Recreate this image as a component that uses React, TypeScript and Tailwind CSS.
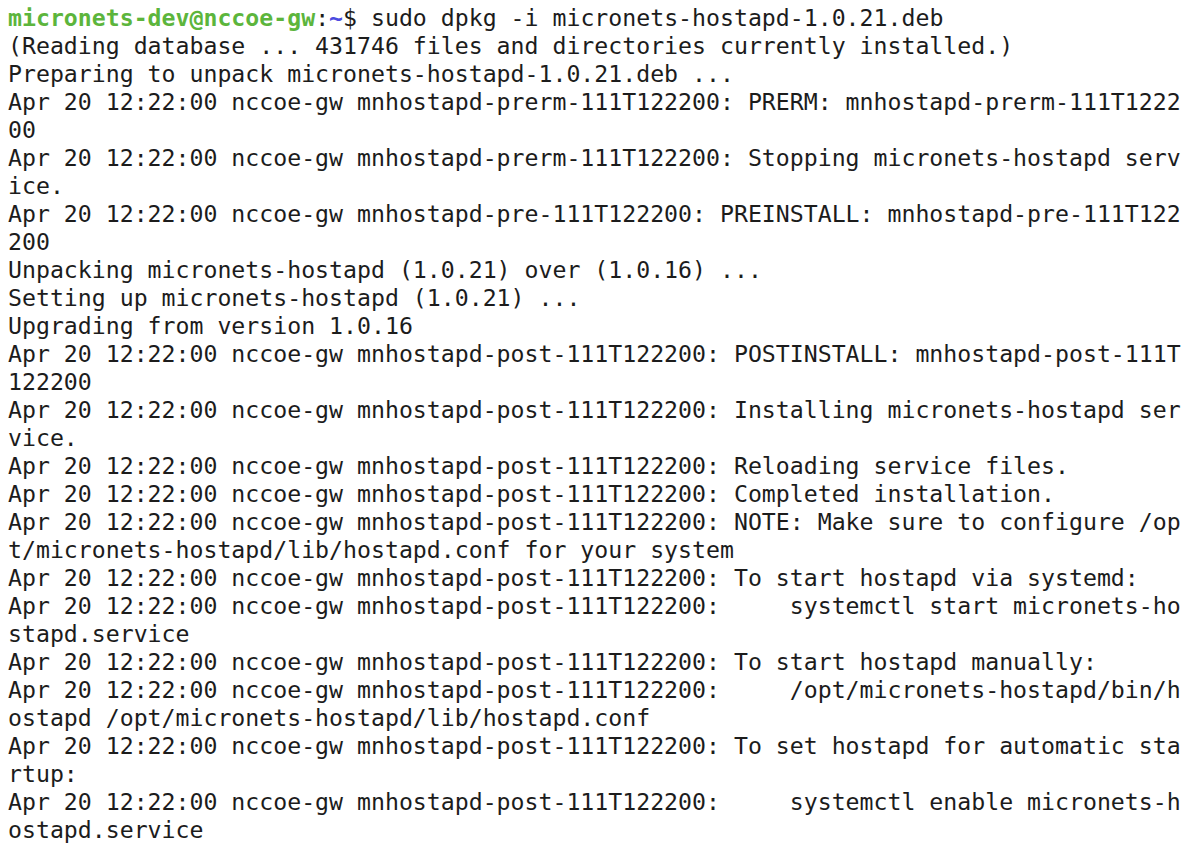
const lines: string[] = [
  "(Reading database ... 431746 files and directories currently installed.)",
  "Preparing to unpack micronets-hostapd-1.0.21.deb ...",
  "Apr 20 12:22:00 nccoe-gw mnhostapd-prerm-111T122200: PRERM: mnhostapd-prerm-111T1222",
  "00",
  "Apr 20 12:22:00 nccoe-gw mnhostapd-prerm-111T122200: Stopping micronets-hostapd serv",
  "ice.",
  "Apr 20 12:22:00 nccoe-gw mnhostapd-pre-111T122200: PREINSTALL: mnhostapd-pre-111T122",
  "200",
  "Unpacking micronets-hostapd (1.0.21) over (1.0.16) ...",
  "Setting up micronets-hostapd (1.0.21) ...",
  "Upgrading from version 1.0.16",
  "Apr 20 12:22:00 nccoe-gw mnhostapd-post-111T122200: POSTINSTALL: mnhostapd-post-111T",
  "122200",
  "Apr 20 12:22:00 nccoe-gw mnhostapd-post-111T122200: Installing micronets-hostapd ser",
  "vice.",
  "Apr 20 12:22:00 nccoe-gw mnhostapd-post-111T122200: Reloading service files.",
  "Apr 20 12:22:00 nccoe-gw mnhostapd-post-111T122200: Completed installation.",
  "Apr 20 12:22:00 nccoe-gw mnhostapd-post-111T122200: NOTE: Make sure to configure /op",
  "t/micronets-hostapd/lib/hostapd.conf for your system",
  "Apr 20 12:22:00 nccoe-gw mnhostapd-post-111T122200: To start hostapd via systemd:",
  "Apr 20 12:22:00 nccoe-gw mnhostapd-post-111T122200:     systemctl start micronets-ho",
  "stapd.service",
  "Apr 20 12:22:00 nccoe-gw mnhostapd-post-111T122200: To start hostapd manually:",
  "Apr 20 12:22:00 nccoe-gw mnhostapd-post-111T122200:     /opt/micronets-hostapd/bin/h",
  "ostapd /opt/micronets-hostapd/lib/hostapd.conf",
  "Apr 20 12:22:00 nccoe-gw mnhostapd-post-111T122200: To set hostapd for automatic sta",
  "rtup:",
  "Apr 20 12:22:00 nccoe-gw mnhostapd-post-111T122200:     systemctl enable micronets-h",
  "ostapd.service",
];

export default function App() {
  return (
    <div className="w-[1192px] h-[844px] overflow-hidden bg-white pt-[4px] pl-[8px] text-[#1c1c1c] font-['DejaVu_Sans_Mono',monospace] text-[23.2px]">
      <div className="h-[28px] leading-[28px] whitespace-pre">
        <span className="font-bold text-[#5cb53c]">micronets-dev@nccoe-gw</span>
        <span>:</span>
        <span className="font-bold text-[#4b4be0]">~</span>
        <span>$ sudo dpkg -i micronets-hostapd-1.0.21.deb</span>
      </div>
      {lines.map((l, i) => (
        <div key={i} className="h-[28px] leading-[28px] whitespace-pre">
          {l}
        </div>
      ))}
    </div>
  );
}
